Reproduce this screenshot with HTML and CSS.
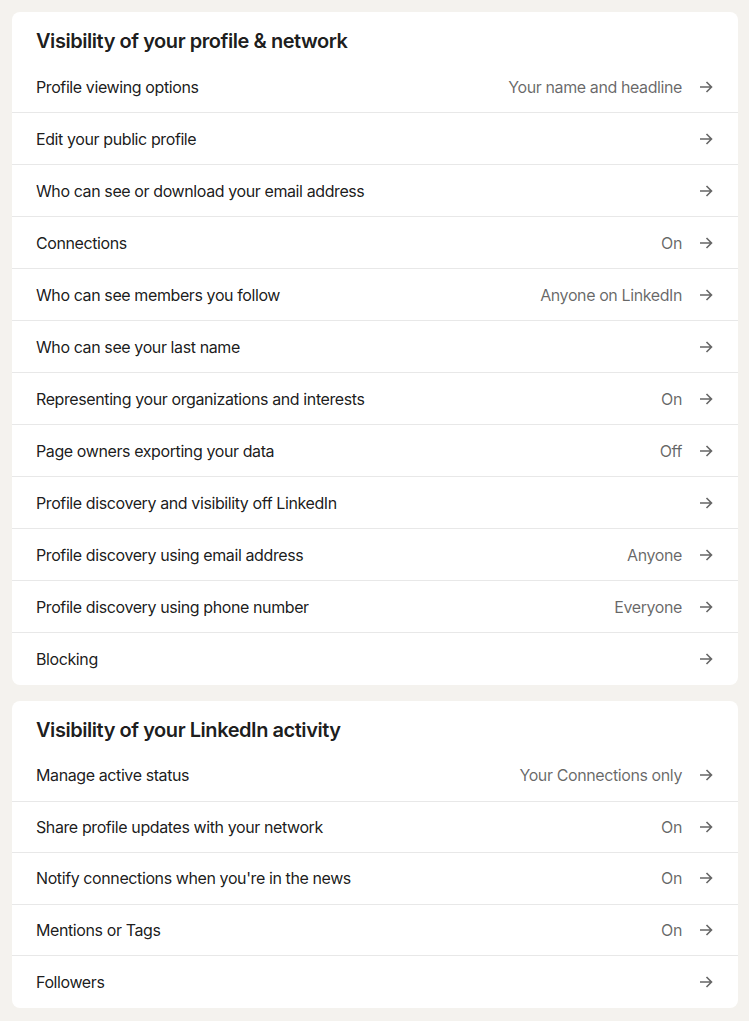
FILE: index.html
```html
<!DOCTYPE html>
<html lang="en">
<head>
<meta charset="utf-8">
<title>Visibility settings</title>
<link rel="stylesheet" href="styles.css">
</head>
<body>
<main class="page">
  <section class="card">
    <h2 class="card-title">Visibility of your profile &amp; network</h2>
    <ul class="list">
      <li class="row"><span class="label">Profile viewing options</span><span class="value">Your name and headline</span><svg class="arrow" viewBox="0 0 14 12"><path d="M1 6h11.5M7.5 1l5 5-5 5"/></svg></li>
      <li class="row"><span class="label">Edit your public profile</span><span class="value"></span><svg class="arrow" viewBox="0 0 14 12"><path d="M1 6h11.5M7.5 1l5 5-5 5"/></svg></li>
      <li class="row"><span class="label">Who can see or download your email address</span><span class="value"></span><svg class="arrow" viewBox="0 0 14 12"><path d="M1 6h11.5M7.5 1l5 5-5 5"/></svg></li>
      <li class="row"><span class="label">Connections</span><span class="value">On</span><svg class="arrow" viewBox="0 0 14 12"><path d="M1 6h11.5M7.5 1l5 5-5 5"/></svg></li>
      <li class="row"><span class="label">Who can see members you follow</span><span class="value">Anyone on LinkedIn</span><svg class="arrow" viewBox="0 0 14 12"><path d="M1 6h11.5M7.5 1l5 5-5 5"/></svg></li>
      <li class="row"><span class="label">Who can see your last name</span><span class="value"></span><svg class="arrow" viewBox="0 0 14 12"><path d="M1 6h11.5M7.5 1l5 5-5 5"/></svg></li>
      <li class="row"><span class="label">Representing your organizations and interests</span><span class="value">On</span><svg class="arrow" viewBox="0 0 14 12"><path d="M1 6h11.5M7.5 1l5 5-5 5"/></svg></li>
      <li class="row"><span class="label">Page owners exporting your data</span><span class="value">Off</span><svg class="arrow" viewBox="0 0 14 12"><path d="M1 6h11.5M7.5 1l5 5-5 5"/></svg></li>
      <li class="row"><span class="label">Profile discovery and visibility off LinkedIn</span><span class="value"></span><svg class="arrow" viewBox="0 0 14 12"><path d="M1 6h11.5M7.5 1l5 5-5 5"/></svg></li>
      <li class="row"><span class="label">Profile discovery using email address</span><span class="value">Anyone</span><svg class="arrow" viewBox="0 0 14 12"><path d="M1 6h11.5M7.5 1l5 5-5 5"/></svg></li>
      <li class="row"><span class="label">Profile discovery using phone number</span><span class="value">Everyone</span><svg class="arrow" viewBox="0 0 14 12"><path d="M1 6h11.5M7.5 1l5 5-5 5"/></svg></li>
      <li class="row"><span class="label">Blocking</span><span class="value"></span><svg class="arrow" viewBox="0 0 14 12"><path d="M1 6h11.5M7.5 1l5 5-5 5"/></svg></li>
    </ul>
  </section>
  <section class="card">
    <h2 class="card-title">Visibility of your LinkedIn activity</h2>
    <ul class="list list-compact">
      <li class="row"><span class="label">Manage active status</span><span class="value">Your Connections only</span><svg class="arrow" viewBox="0 0 14 12"><path d="M1 6h11.5M7.5 1l5 5-5 5"/></svg></li>
      <li class="row"><span class="label">Share profile updates with your network</span><span class="value">On</span><svg class="arrow" viewBox="0 0 14 12"><path d="M1 6h11.5M7.5 1l5 5-5 5"/></svg></li>
      <li class="row"><span class="label">Notify connections when you're in the news</span><span class="value">On</span><svg class="arrow" viewBox="0 0 14 12"><path d="M1 6h11.5M7.5 1l5 5-5 5"/></svg></li>
      <li class="row"><span class="label">Mentions or Tags</span><span class="value">On</span><svg class="arrow" viewBox="0 0 14 12"><path d="M1 6h11.5M7.5 1l5 5-5 5"/></svg></li>
      <li class="row"><span class="label">Followers</span><span class="value"></span><svg class="arrow" viewBox="0 0 14 12"><path d="M1 6h11.5M7.5 1l5 5-5 5"/></svg></li>
    </ul>
  </section>
</main>
</body>
</html>
```
FILE: styles.css
```css
* { box-sizing: border-box; }
html, body { margin: 0; padding: 0; }
body {
  background: #f4f2ee;
  font-family: Inter, "Noto Sans", "Liberation Sans", sans-serif;
  color: rgba(0, 0, 0, 0.9);
  -webkit-font-smoothing: antialiased;
}
.page {
  display: flex;
  flex-direction: column;
  gap: 16px;
  padding: 12px 11px 12px 12px;
}
.card {
  background: #fff;
  border-radius: 8px;
  overflow: hidden;
}
.card-title {
  margin: 0;
  padding: 15px 24px 6px;
  font-size: 20px;
  line-height: 28px;
  font-weight: 600;
  color: rgba(0, 0, 0, 0.9);
  letter-spacing: -0.45px;
}
.list {
  list-style: none;
  margin: 0;
  padding: 0;
}
.row {
  display: flex;
  align-items: center;
  height: 52px;
  padding: 0 25px 0 24px;
  font-size: 16px;
  line-height: 24px;
  letter-spacing: -0.4px;
  border-bottom: 1px solid #e8e8e8;
}
.row:last-child { border-bottom: none; }
.list-compact .row { height: 51.6px; }
.label {
  flex: 1;
  min-width: 0;
}
.value {
  color: rgba(0, 0, 0, 0.6);
  margin-right: 17px;
}
.value:empty { margin-right: 0; }
.arrow {
  width: 14px;
  height: 12px;
  flex: none;
  fill: none;
  stroke: #666;
  stroke-width: 1.6;
}
```
